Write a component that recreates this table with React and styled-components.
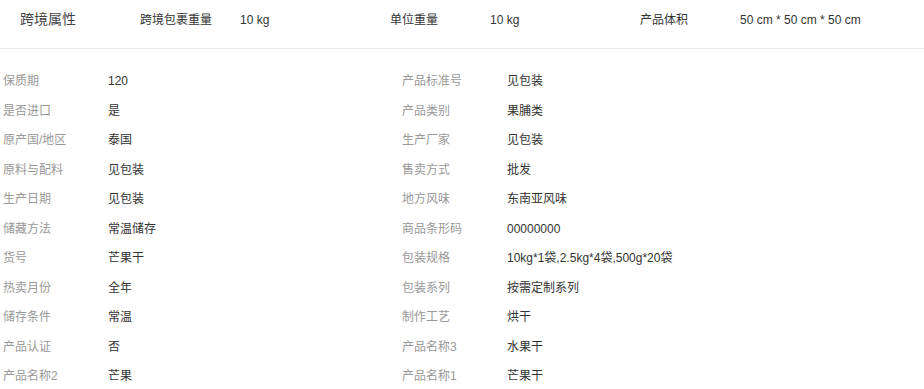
import React from 'react';
import styled, { createGlobalStyle } from 'styled-components';

const GlobalStyle = createGlobalStyle`
  body {
    margin: 0;
    background: #fff;
    font-family: "Liberation Sans", Arial, "Noto Sans CJK SC", sans-serif;
  }
`;

const Page = styled.div`
  width: 924px;
`;

const Header = styled.div`
  display: flex;
  align-items: center;
  height: 36px;
  padding-left: 20px;
  border-bottom: 1px solid #e8e8e8;
  padding-bottom: 12px;
`;

const HeaderTitle = styled.div`
  width: 120px;
  font-size: 14px;
  color: #444;
`;

const HeaderItem = styled.div`
  display: flex;
  align-items: baseline;
  width: 250px;
  font-size: 12px;
  color: #333;
`;

const HeaderLabel = styled.span`
  width: 100px;
`;

const Grid = styled.div`
  display: grid;
  grid-template-columns: 399px 400px;
  padding: 18px 0 0 3px;
`;

const Row = styled.div`
  display: flex;
  align-items: baseline;
  height: 29.5px;
  line-height: 29.5px;
  font-size: 12px;
`;

const Label = styled.span`
  width: 105px;
  color: #999;
`;

const Value = styled.span`
  color: #333;
`;

const cross = [
  ['跨境包裹重量', '10 kg'],
  ['单位重量', '10 kg'],
  ['产品体积', '50 cm * 50 cm * 50 cm'],
];

const attrs = [
  ['保质期', '120', '产品标准号', '见包装'],
  ['是否进口', '是', '产品类别', '果脯类'],
  ['原产国/地区', '泰国', '生产厂家', '见包装'],
  ['原料与配料', '见包装', '售卖方式', '批发'],
  ['生产日期', '见包装', '地方风味', '东南亚风味'],
  ['储藏方法', '常温储存', '商品条形码', '00000000'],
  ['货号', '芒果干', '包装规格', '10kg*1袋,2.5kg*4袋,500g*20袋'],
  ['热卖月份', '全年', '包装系列', '按需定制系列'],
  ['储存条件', '常温', '制作工艺', '烘干'],
  ['产品认证', '否', '产品名称3', '水果干'],
  ['产品名称2', '芒果', '产品名称1', '芒果干'],
];

export default function App() {
  return (
    <Page>
      <GlobalStyle />
      <Header>
        <HeaderTitle>跨境属性</HeaderTitle>
        {cross.map(([k, v]) => (
          <HeaderItem key={k}>
            <HeaderLabel>{k}</HeaderLabel>
            <span>{v}</span>
          </HeaderItem>
        ))}
      </Header>
      <Grid>
        {attrs.map(([k1, v1, k2, v2]) => (
          <React.Fragment key={k1}>
            <Row>
              <Label>{k1}</Label>
              <Value>{v1}</Value>
            </Row>
            <Row>
              <Label>{k2}</Label>
              <Value>{v2}</Value>
            </Row>
          </React.Fragment>
        ))}
      </Grid>
    </Page>
  );
}
